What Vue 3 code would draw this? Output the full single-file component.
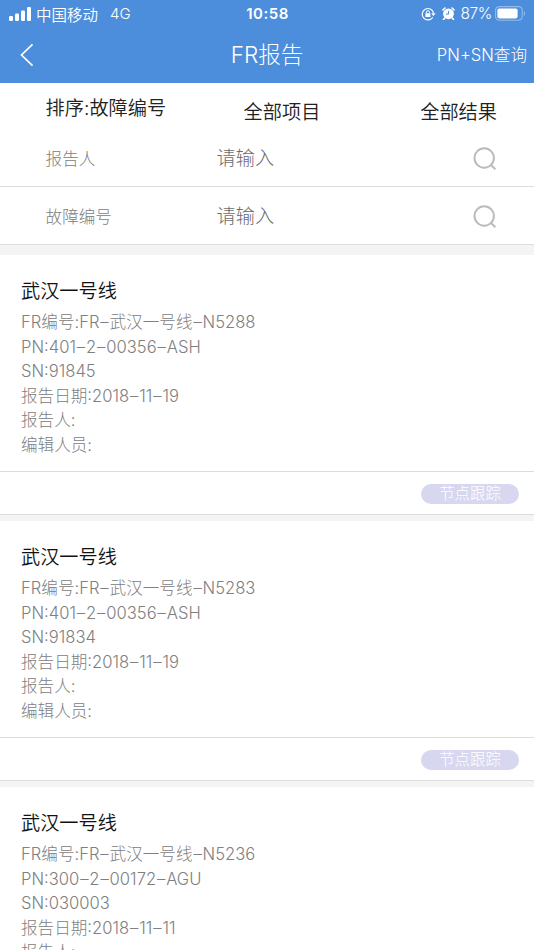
<template>
  <div class="page">
    <header class="header">
      <div class="status-bar">
        <div class="carrier">
          <svg class="signal" viewBox="0 0 22 14">
            <rect x="0" y="9" width="4" height="5" rx="1.2" />
            <rect x="6" y="6.5" width="4" height="7.5" rx="1.2" />
            <rect x="12" y="3.5" width="4" height="10.5" rx="1.2" />
            <rect x="18" y="0" width="4" height="14" rx="1.2" />
          </svg>
          <span class="operator">中国移动</span>
          <span class="network">4G</span>
        </div>
        <span class="clock">10:58</span>
        <div class="indicators">
          <svg class="lock" viewBox="0 0 15 14">
            <path d="M11.8 10.2A5.7 5.7 0 1 1 12.5 6" fill="none" stroke="#fff" stroke-width="1.2" />
            <path d="M10.2 6.2h4.4l-2.2 2.9z" fill="#fff" />
            <rect x="4.4" y="6.2" width="5" height="3.8" rx=".5" fill="#fff" />
            <path d="M5.4 6.5V5.2a1.5 1.5 0 0 1 3 0v1.3" fill="none" stroke="#fff" />
          </svg>
          <svg class="alarm" viewBox="0 0 13 13">
            <circle cx="6.5" cy="6.8" r="5.4" fill="#fff" />
            <path d="M.9 3 3 1M10 1l2.1 2M2.8 11 1.5 12.4M10.2 11l1.3 1.4" stroke="#fff" stroke-width="1.6" stroke-linecap="round" />
            <path d="M6.6 3.8v3.3H4" fill="none" stroke="#4c8ddc" stroke-width="1" />
          </svg>
          <span class="percent">87%</span>
          <svg class="battery" viewBox="0 0 31 15">
            <rect x=".6" y=".6" width="26.6" height="13.6" rx="3.6" fill="none" stroke="#93bbea" stroke-width="1.1" />
            <rect x="2.4" y="2.4" width="20.2" height="10" rx="1.8" fill="#fff" />
            <path d="M28.8 5.2c1.9.7 1.9 3.9 0 4.6z" fill="#93bbea" />
          </svg>
        </div>
      </div>
      <nav class="nav-bar">
        <svg class="back" viewBox="0 0 14 24">
          <path d="M12.5 1.3 1.5 12l11 10.7" fill="none" stroke="#fff" stroke-width="1.7" />
        </svg>
        <h1>FR报告</h1>
        <span class="query">PN+SN查询</span>
      </nav>
    </header>

    <section class="filters">
      <div class="filter-tabs">
        <span class="sort">排序:故障编号</span>
        <span class="project">全部项目</span>
        <span class="result">全部结果</span>
      </div>
      <div v-for="field in fields" :key="field.key" class="search-row">
        <label :for="field.key">{{ field.label }}</label>
        <input :id="field.key" v-model="search[field.key]" type="text" placeholder="请输入" />
        <svg class="search-icon" viewBox="0 0 24 24">
          <circle cx="11.2" cy="11" r="9.7" />
          <path d="m17.8 17.8 4.6 4.4" />
        </svg>
      </div>
    </section>

    <main>
      <article v-for="report in reports" :key="report.no" class="card">
        <div class="card-body">
          <h2>{{ report.line }}</h2>
          <p v-for="row in rowsOf(report)" :key="row.label">
            {{ row.label }}:<template v-for="(part, i) in row.parts" :key="i"><span v-if="i" class="dash">–</span>{{ part }}</template>
          </p>
        </div>
        <div class="card-footer">
          <button type="button">节点跟踪</button>
        </div>
      </article>
    </main>
  </div>
</template>

<script setup>
import { reactive } from 'vue';

const fields = [
  { key: 'reporter', label: '报告人' },
  { key: 'faultNo', label: '故障编号' }
];

const search = reactive({ reporter: '', faultNo: '' });

const reports = [
  { line: '武汉一号线', no: 'N5288', pn: '401-2-00356-ASH', sn: '91845', date: '2018-11-19', reporter: '', editor: '' },
  { line: '武汉一号线', no: 'N5283', pn: '401-2-00356-ASH', sn: '91834', date: '2018-11-19', reporter: '', editor: '' },
  { line: '武汉一号线', no: 'N5236', pn: '300-2-00172-AGU', sn: '030003', date: '2018-11-11', reporter: '', editor: '' }
];

// Values are split on the hyphen so the dashes can get their own spacing
const rowsOf = (report) => [
  { label: 'FR编号', parts: ['FR', report.line, report.no] },
  { label: 'PN', parts: report.pn.split('-') },
  { label: 'SN', parts: [report.sn] },
  { label: '报告日期', parts: report.date.split('-') },
  { label: '报告人', parts: [report.reporter] },
  { label: '编辑人员', parts: [report.editor] }
];
</script>

<style>
body {
  overflow: hidden;
}
</style>

<style scoped>
.page {
  height: 950px;
  overflow: hidden;
  background: #f4f4f4;
  font-family: Inter, "Noto Sans CJK SC", sans-serif;
  font-weight: 300;
  color: #222;
}

.header {
  height: 83px;
  background: #4c8ddc;
  color: #fff;
}

.status-bar {
  display: grid;
  grid-template-columns: 1fr auto 1fr;
  align-items: center;
  height: 27px;
  padding: 0 8px 0 9px;
  font-size: 15px;
  font-weight: 400;
}

.carrier {
  display: flex;
  align-items: center;
}

.signal {
  width: 22px;
  height: 14px;
  fill: #fff;
}

.operator {
  margin-left: 5px;
  font-size: 15.5px;
  font-weight: 350;
}

.network {
  margin-left: 12px;
  font-weight: 350;
}

.clock {
  font-size: 15px;
  font-weight: 600;
  letter-spacing: 0.5px;
}

.indicators {
  display: flex;
  align-items: center;
  justify-content: flex-end;
}

.lock {
  width: 15px;
  height: 14px;
}

.alarm {
  width: 13px;
  height: 13px;
  margin: 0 6px;
}

.percent {
  font-size: 15.5px;
  font-weight: 350;
  letter-spacing: -0.4px;
}

.battery {
  width: 31px;
  height: 15px;
  margin-left: 3px;
}

.nav-bar {
  display: grid;
  grid-template-columns: 1fr auto 1fr;
  align-items: center;
  height: 56px;
  padding: 0 7px;
}

.back {
  width: 14px;
  height: 24px;
  margin-left: 13px;
}

h1 {
  margin: 0 0 5px;
  font-size: 22.5px;
  font-weight: 300;
}

.query {
  justify-self: end;
  margin-bottom: 3px;
  font-size: 16.6px;
}

.filters {
  background: #fff;
  margin-bottom: 10px;
}

.filter-tabs {
  display: flex;
  align-items: center;
  height: 46px;
  padding: 0 37px 0 45.6px;
  font-size: 19.2px;
  font-weight: 350;
  line-height: 28px;
}

.sort {
  width: 198px;
  margin-top: 3px;
}

.project {
  flex: 1;
  margin-top: 11px;
}

.result {
  margin-top: 11px;
}

.search-row {
  display: flex;
  align-items: center;
  box-sizing: border-box;
  height: 58px;
  padding: 0 37px 0 45.6px;
  border-bottom: 1px solid #dcdcdc;
}

label {
  width: 171px;
  font-size: 16.6px;
  color: #808080;
}

input {
  flex: 1;
  min-width: 0;
  padding: 0;
  border: 0;
  outline: 0;
  background: none;
  font: inherit;
  font-size: 19.2px;
}

input::placeholder {
  color: #6c6c6c;
  opacity: 1;
}

.search-icon {
  width: 24px;
  height: 24px;
  margin-top: 2px;
  fill: none;
  stroke: #bbb;
  stroke-width: 2;
}

.card {
  margin-bottom: 6px;
  background: #fff;
}

.card-body {
  box-sizing: border-box;
  height: 217px;
  padding: 21px 21px 0;
  border-bottom: 1px solid #dcdcdc;
}

h2 {
  margin: 0 0 4px;
  font-size: 19.2px;
  font-weight: 350;
  line-height: 30px;
  color: #111;
}

p {
  margin: 0;
  font-size: 16.6px;
  line-height: 24.55px;
  color: #808080;
  white-space: nowrap;
}

.dash {
  padding: 0 0.9px;
}

.card-footer {
  display: flex;
  align-items: center;
  justify-content: flex-end;
  box-sizing: border-box;
  height: 43px;
  padding-right: 15px;
  border-bottom: 1px solid #dcdcdc;
}

button {
  width: 98px;
  height: 20px;
  margin-top: 1px;
  padding: 0;
  border: 0;
  border-radius: 10px;
  background: #d7d8f0;
  color: #fff;
  font: inherit;
  font-size: 15.4px;
  line-height: 20px;
}
</style>
